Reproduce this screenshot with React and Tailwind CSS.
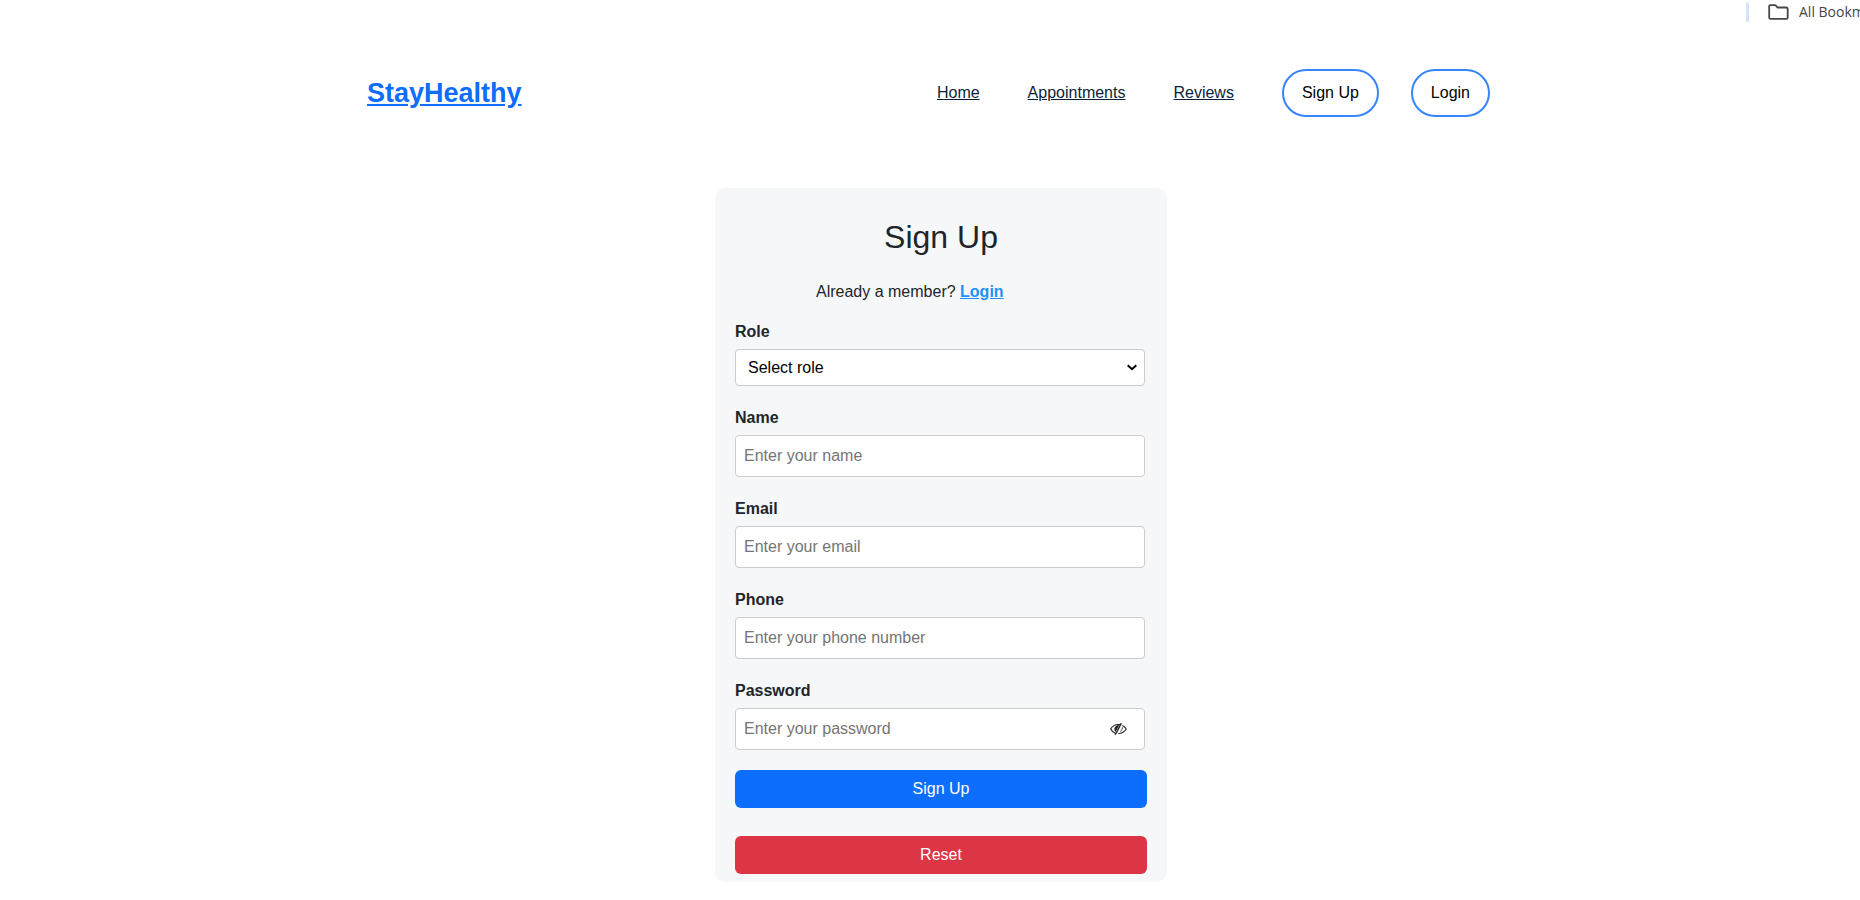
function FolderIcon() {
  return (
    <svg width="21" height="16" viewBox="0 0 21 16" fill="none" stroke="currentColor" strokeWidth="1.8" strokeLinejoin="round" aria-hidden="true">
      <path d="M1.2 2.300a1.200 1.200 0 0 1 1.200-1.200h4.900l2.400 2.400h8.600a1.400 1.400 0 0 1 1.400 1.400v8.500a1.400 1.400 0 0 1-1.400 1.400H2.600a1.400 1.400 0 0 1-1.400-1.400z" />
    </svg>
  );
}

function EyeOffIcon() {
  return (
    <svg width="17" height="12" viewBox="0 0 17 12" fill="none" stroke="#212529" aria-hidden="true">
      <path d="M5.200 10.200C3.200 9.300 1.700 7.900.7 6 2.300 3.200 5 1.500 8.400 1.500c.7 0 1.300.1 1.900.2" strokeWidth="1.200" />
      <path d="M12.400 2.600c1.600.8 2.900 1.900 3.900 3.400-1.700 2.800-4.400 4.400-8 4.500" strokeWidth="1.100" />
      <path d="M9.300 1.900 5.500 8.900A4.200 4.200 0 0 1 4.300 6C4.300 3.600 6.400 1.900 9.300 1.900z" fill="#212529" stroke="none" />
      <path d="M11.400.2 5.200 11.800" strokeWidth="1.400" />
      <path d="M12.300 4.200c.2 1.700-.5 3.200-2.100 4.300" strokeWidth=".9" />
    </svg>
  );
}

function ChevronIcon() {
  return (
    <svg width="10" height="7" viewBox="0 0 10 7" fill="none" stroke="#000" strokeWidth="2" className="pointer-events-none absolute top-[15px] right-[8px]" aria-hidden="true">
      <path d="M.7 1.200 5 5.200 9.300 1.200" />
    </svg>
  );
}

const inputClass =
  "h-[42px] w-full rounded border border-[#ccc] bg-white px-2 text-black placeholder:text-[#757575]";

function Field({ id, label, children }) {
  return (
    <div className="mb-5 flex flex-col gap-[5px]">
      <label htmlFor={id} className="font-bold">{label}</label>
      {children}
    </div>
  );
}

export default function App() {
  return (
    <div className="min-h-screen overflow-hidden bg-white font-['Liberation_Sans',Arial,sans-serif] text-base text-[#212529]">
      <div className="flex h-6 justify-end overflow-hidden">
        <div className="flex w-[114px] items-center gap-[19px] whitespace-nowrap text-[#474747]">
          <span className="h-5 w-[3px] shrink-0 rounded-sm bg-[#d3e3fd]" />
          <a href="#bookmarks" className="flex shrink-0 items-center gap-[10px] font-['Open_Sans',sans-serif] text-sm">
            <FolderIcon />
            All Bookmarks
          </a>
        </div>
      </div>

      <header className="mx-auto mt-[45px] flex h-12 max-w-[1126px] items-center justify-between pr-[3px]">
        <a href="#home" className="text-[27px] font-bold text-[#0d6efd] underline">StayHealthy</a>
        <nav className="flex items-center gap-12 text-[#0b1f3a]">
          <a href="#home" className="underline">Home</a>
          <a href="#appointments" className="underline">Appointments</a>
          <a href="#reviews" className="underline">Reviews</a>
          <div className="flex gap-8 text-black">
            <button type="button" className="h-12 rounded-full border-2 border-[#3685fb] px-[18px]">Sign Up</button>
            <button type="button" className="h-12 rounded-full border-2 border-[#3685fb] px-[18px]">Login</button>
          </div>
        </nav>
      </header>

      <main className="flex justify-center pt-[71px] pb-4 pl-[22px]">
        <div className="w-full max-w-[452px] rounded-[10px] bg-[#f6f7f9] px-5 pt-[30px] pb-2">
          <h1 className="mb-6 text-center text-[32px] leading-[38px]">Sign Up</h1>
          <p className="mb-4 pl-[81px]">
            Already a member? <a href="#login" className="font-bold text-[#1e90ff] underline">Login</a>
          </p>
          <form>
            <div className="pr-[2px]">
              <Field id="role" label="Role">
                <div className="relative">
                  <select id="role" className="block h-[37px] w-full appearance-none rounded border border-[#ccc] bg-white px-3 text-black">
                    <option>Select role</option>
                    <option>Patient</option>
                    <option>Doctor</option>
                  </select>
                  <ChevronIcon />
                </div>
              </Field>
              <Field id="name" label="Name">
                <input id="name" type="text" placeholder="Enter your name" className={inputClass} />
              </Field>
              <Field id="email" label="Email">
                <input id="email" type="email" placeholder="Enter your email" className={inputClass} />
              </Field>
              <Field id="phone" label="Phone">
                <input id="phone" type="tel" placeholder="Enter your phone number" className={inputClass} />
              </Field>
              <Field id="password" label="Password">
                <div className="relative">
                  <input id="password" type="password" placeholder="Enter your password" className={inputClass} />
                  <button type="button" aria-label="Show password" className="absolute inset-y-0 right-[18px] flex items-center">
                    <EyeOffIcon />
                  </button>
                </div>
              </Field>
            </div>
            <button type="submit" className="mb-7 h-[38px] w-full rounded-md bg-[#0d6efd] text-white">Sign Up</button>
            <button type="reset" className="h-[38px] w-full rounded-md bg-[#dc3545] text-white">Reset</button>
          </form>
        </div>
      </main>
    </div>
  );
}
